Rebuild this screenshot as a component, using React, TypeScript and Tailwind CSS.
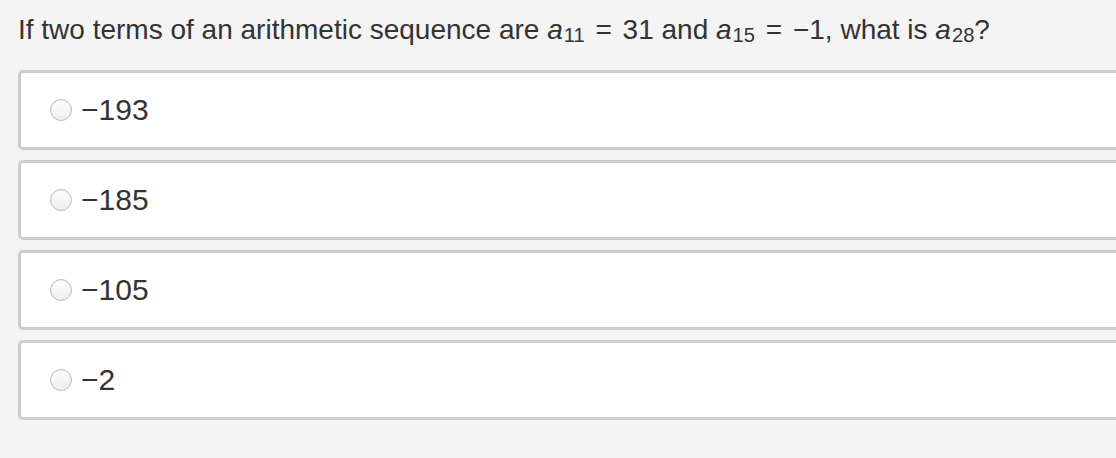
const options = ['\u2212193', '\u2212185', '\u2212105', '\u22122'];

function Term({ sub }: { sub: string }) {
  return (
    <span>
      <i>a</i>
      <sub className="text-[0.72em] relative top-[0.16em] ml-[1px]">{sub}</sub>
    </span>
  );
}

function Eq() {
  return <span className="mx-[3px]">=</span>;
}

export default function App() {
  return (
    <div
      className="w-[1116px] h-[458px] overflow-hidden bg-[#f4f4f4] text-[#333]"
      style={{ fontFamily: '"Liberation Sans", Arial, sans-serif' }}
    >
      <div className="pl-[18px] pt-[13px] text-[28px] leading-[34px] whitespace-nowrap">
        If two terms of an arithmetic sequence are <Term sub="11" /> <Eq /> 31 and <Term sub="15" /> <Eq /> {'\u2212'}1, what
        is <Term sub="28" />?
      </div>
      <div className="mt-[23px] pl-[18px] flex flex-col gap-[10px]">
        {options.map((opt) => (
          <label
            key={opt}
            className="w-[1110px] h-[80px] bg-white border-[3px] border-[#cccccc] rounded-[5px] flex items-center pl-[29px] gap-[9px]"
          >
            <span className="w-[22px] h-[22px] rounded-full border border-[#bdbdbd] bg-gradient-to-b from-white to-[#ececec] shadow-[inset_0_1px_1px_rgba(0,0,0,0.06)]" />
            <span className="text-[30px] leading-none">{opt}</span>
          </label>
        ))}
      </div>
    </div>
  );
}
